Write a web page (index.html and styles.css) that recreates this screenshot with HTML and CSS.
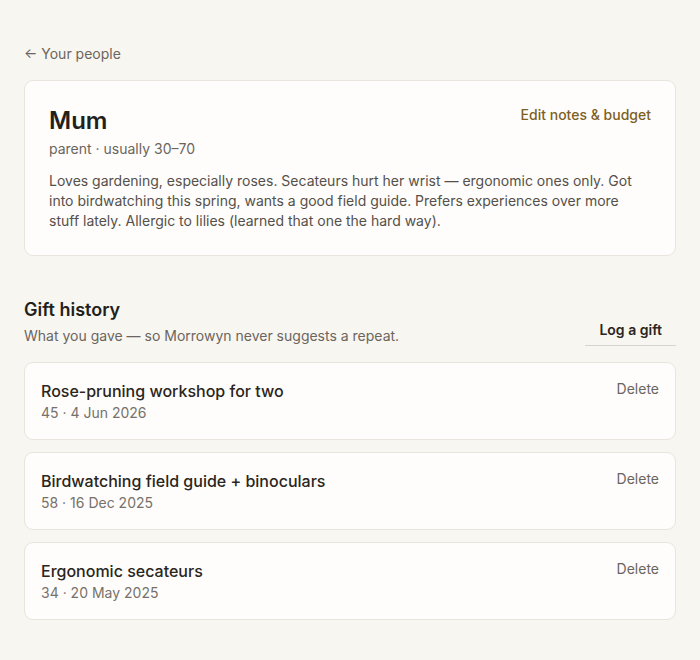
FILE: index.html
```html
<!DOCTYPE html>
<html lang="en">
<head>
<meta charset="utf-8">
<link rel="stylesheet" href="styles.css">
</head>
<body>
<div class="page">
  <a class="back" href="#">← Your people</a>
  <section class="card person">
    <div class="person-head">
      <div>
        <h1 class="name">Mum</h1>
        <div class="sub">parent · usually 30–70</div>
      </div>
      <a class="edit" href="#">Edit notes &amp; budget</a>
    </div>
    <p class="notes">Loves gardening, especially roses. Secateurs hurt her wrist — ergonomic ones only. Got into birdwatching this spring, wants a good field guide. Prefers experiences over more stuff lately. Allergic to lilies (learned that one the hard way).</p>
  </section>

  <section class="history">
    <div class="history-head">
      <div>
        <h2 class="h2">Gift history</h2>
        <div class="sub">What you gave — so Morrowyn never suggests a repeat.</div>
      </div>
      <button class="log">Log a gift</button>
    </div>
    <div class="gifts">
      <div class="card gift">
        <div>
          <div class="gift-title">Rose-pruning workshop for two</div>
          <div class="gift-meta">45 · 4 Jun 2026</div>
        </div>
        <button class="del">Delete</button>
      </div>
      <div class="card gift">
        <div>
          <div class="gift-title">Birdwatching field guide + binoculars</div>
          <div class="gift-meta">58 · 16 Dec 2025</div>
        </div>
        <button class="del">Delete</button>
      </div>
      <div class="card gift">
        <div>
          <div class="gift-title">Ergonomic secateurs</div>
          <div class="gift-meta">34 · 20 May 2025</div>
        </div>
        <button class="del">Delete</button>
      </div>
    </div>
  </section>
</div>
</body>
</html>
```

FILE: styles.css
```css
* { box-sizing: border-box; }
html, body { margin: 0; padding: 0; }
body {
  background: #f8f6f1;
  font-family: Inter, "Noto Sans", sans-serif;
  color: #2a2520;
  font-size: 14px;
  line-height: 20px;
}
.page {
  padding: 44px 24px 24px;
}
.back {
  display: block;
  color: #6b655e;
  text-decoration: none;
  margin-bottom: 16px;
}
.card {
  background: #fefdfb;
  border: 1px solid #e9e5de;
  border-radius: 9px;
}
.person {
  padding: 24px;
}
.person-head {
  display: flex;
  justify-content: space-between;
  align-items: flex-start;
}
.name {
  margin: 0;
  font-size: 24px;
  line-height: 32px;
  font-weight: 600;
  color: #231f1b;
}
.sub {
  color: #6b655e;
  margin-top: 2px;
}
.edit {
  color: #7d5f1f;
  font-weight: 500;
  text-decoration: none;
}
.notes {
  margin: 12px 0 0;
  color: #55504a;
}
.history {
  margin-top: 40px;
}
.history-head {
  display: flex;
  justify-content: space-between;
  align-items: flex-end;
}
.h2 {
  margin: 0;
  font-size: 18px;
  line-height: 28px;
  font-weight: 600;
  color: #231f1b;
}
.history-head .sub { margin-top: 2px; }
.log {
  font: inherit;
  font-weight: 600;
  color: #2a2520;
  background: transparent;
  border: none;
  border-bottom: 1px solid #d9d4cc;
  padding: 4px 14px 5px;
  margin-bottom: 0;
}
.gifts {
  margin-top: 16px;
  display: flex;
  flex-direction: column;
  gap: 12px;
}
.gift {
  display: flex;
  justify-content: space-between;
  align-items: flex-start;
  padding: 16px;
}
.gift-title {
  font-size: 16px;
  line-height: 24px;
  font-weight: 500;
  color: #2a2520;
}
.gift-meta {
  color: #77716a;
}
.del {
  font: inherit;
  color: #6b655e;
  background: none;
  border: none;
  padding: 0;
  margin-top: 0;
}
```
